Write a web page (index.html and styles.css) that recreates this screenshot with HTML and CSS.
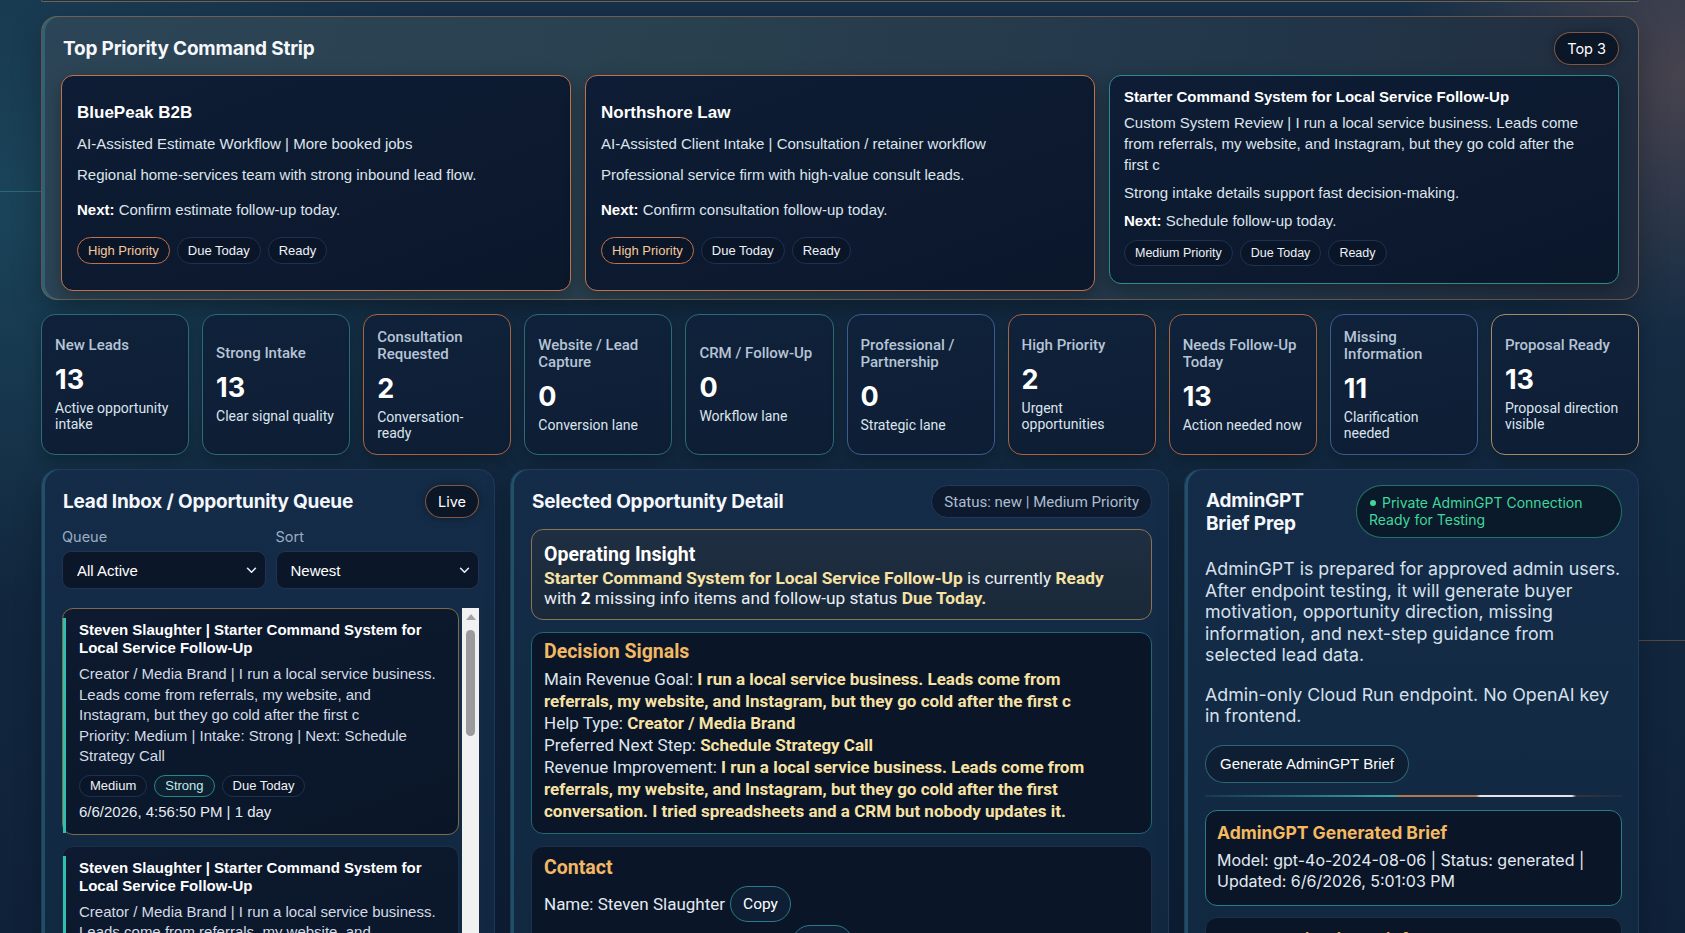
FILE: index.html
```html
<!DOCTYPE html>
<html lang="en">
<head>
    <meta charset="UTF-8">
    <meta name="viewport" content="width=device-width, initial-scale=1.0">
    <title>Opportunity Command Center</title>
    <link rel="stylesheet" href="styles.css">
</head>
<body>
    <div class="shell">
        <!-- tail of the header panel above -->
        <div class="hero-edge"></div>

        <!-- Top priority strip -->
        <section class="strip">
            <div class="strip-head">
                <h2>Top Priority Command Strip</h2>
                <span class="pill pill-warm">Top 3</span>
            </div>
            <div class="strip-cards">
                <div class="cmd-card hot">
                    <h3>BluePeak B2B</h3>
                    <p>AI-Assisted Estimate Workflow | More booked jobs</p>
                    <p>Regional home-services team with strong inbound lead flow.</p>
                    <p class="next"><b>Next:</b> Confirm estimate follow-up today.</p>
                    <div class="tags">
                        <span class="tag tag-hot">High Priority</span>
                        <span class="tag">Due Today</span>
                        <span class="tag">Ready</span>
                    </div>
                </div>
                <div class="cmd-card hot">
                    <h3>Northshore Law</h3>
                    <p>AI-Assisted Client Intake | Consultation / retainer workflow</p>
                    <p>Professional service firm with high-value consult leads.</p>
                    <p class="next"><b>Next:</b> Confirm consultation follow-up today.</p>
                    <div class="tags">
                        <span class="tag tag-hot">High Priority</span>
                        <span class="tag">Due Today</span>
                        <span class="tag">Ready</span>
                    </div>
                </div>
                <div class="cmd-card selected">
                    <h3>Starter Command System for Local Service Follow-Up</h3>
                    <p>Custom System Review | I run a local service business. Leads come from referrals, my website, and Instagram, but they go cold after the first c</p>
                    <p>Strong intake details support fast decision-making.</p>
                    <p><b>Next:</b> Schedule follow-up today.</p>
                    <div class="tags">
                        <span class="tag">Medium Priority</span>
                        <span class="tag">Due Today</span>
                        <span class="tag">Ready</span>
                    </div>
                </div>
            </div>
        </section>

        <!-- Pipeline counters -->
        <section class="stats">
            <div class="stat teal">
                <div class="stat-label">New Leads</div>
                <div class="stat-num">13</div>
                <div class="stat-sub">Active opportunity intake</div>
            </div>
            <div class="stat teal">
                <div class="stat-label">Strong Intake</div>
                <div class="stat-num">13</div>
                <div class="stat-sub">Clear signal quality</div>
            </div>
            <div class="stat orange">
                <div class="stat-label">Consultation Requested</div>
                <div class="stat-num">2</div>
                <div class="stat-sub">Conversation-ready</div>
            </div>
            <div class="stat teal">
                <div class="stat-label">Website / Lead Capture</div>
                <div class="stat-num">0</div>
                <div class="stat-sub">Conversion lane</div>
            </div>
            <div class="stat teal">
                <div class="stat-label">CRM / Follow-Up</div>
                <div class="stat-num">0</div>
                <div class="stat-sub">Workflow lane</div>
            </div>
            <div class="stat blue">
                <div class="stat-label">Professional / Partnership</div>
                <div class="stat-num">0</div>
                <div class="stat-sub">Strategic lane</div>
            </div>
            <div class="stat orange">
                <div class="stat-label">High Priority</div>
                <div class="stat-num">2</div>
                <div class="stat-sub">Urgent opportunities</div>
            </div>
            <div class="stat orange">
                <div class="stat-label">Needs Follow-Up Today</div>
                <div class="stat-num">13</div>
                <div class="stat-sub">Action needed now</div>
            </div>
            <div class="stat blue">
                <div class="stat-label">Missing Information</div>
                <div class="stat-num">11</div>
                <div class="stat-sub">Clarification needed</div>
            </div>
            <div class="stat tan">
                <div class="stat-label">Proposal Ready</div>
                <div class="stat-num">13</div>
                <div class="stat-sub">Proposal direction visible</div>
            </div>
        </section>

        <div class="workspace">
            <!-- Lead inbox -->
            <section class="panel">
                <div class="panel-head">
                    <h2>Lead Inbox / Opportunity Queue</h2>
                    <span class="pill pill-warm">Live</span>
                </div>
                <div class="filters">
                    <label class="field">
                        <span>Queue</span>
                        <div class="select-wrap">
                            <select><option>All Active</option><option>Due Today</option></select>
                            <svg class="chev" viewBox="0 0 12 8" width="11" height="7"><path d="M1.5 1.5l4.5 4.5 4.5-4.5" fill="none" stroke="#e9eef5" stroke-width="1.8" stroke-linecap="round" stroke-linejoin="round"/></svg>
                        </div>
                    </label>
                    <label class="field">
                        <span>Sort</span>
                        <div class="select-wrap">
                            <select><option>Newest</option><option>Oldest</option></select>
                            <svg class="chev" viewBox="0 0 12 8" width="11" height="7"><path d="M1.5 1.5l4.5 4.5 4.5-4.5" fill="none" stroke="#e9eef5" stroke-width="1.8" stroke-linecap="round" stroke-linejoin="round"/></svg>
                        </div>
                    </label>
                </div>

                <div class="lead-scroll">
                    <div class="lead-list">
                        <article class="lead-card active">
                            <h4>Steven Slaughter | Starter Command System for Local Service Follow-Up</h4>
                            <p>Creator / Media Brand | I run a local service business. Leads come from referrals, my website, and Instagram, but they go cold after the first c</p>
                            <p>Priority: Medium | Intake: Strong | Next: Schedule Strategy Call</p>
                            <div class="tags">
                                <span class="tag">Medium</span>
                                <span class="tag tag-teal">Strong</span>
                                <span class="tag">Due Today</span>
                            </div>
                            <div class="lead-date">6/6/2026, 4:56:50 PM | 1 day</div>
                        </article>
                        <article class="lead-card">
                            <h4>Steven Slaughter | Starter Command System for Local Service Follow-Up</h4>
                            <p>Creator / Media Brand | I run a local service business. Leads come from referrals, my website, and Instagram, but they go cold after the first c</p>
                            <p>Priority: Medium | Intake: Strong | Next: Schedule Strategy Call</p>
                            <div class="tags">
                                <span class="tag">Medium</span>
                                <span class="tag tag-teal">Strong</span>
                                <span class="tag">Due Today</span>
                            </div>
                            <div class="lead-date">6/6/2026, 4:41:12 PM | 1 day</div>
                        </article>
                    </div>
                    <!-- list scrollbar -->
                    <div class="scrollbar">
                        <span class="sb-arrow"></span>
                        <span class="sb-thumb"></span>
                    </div>
                </div>
            </section>

            <!-- Selected lead detail -->
            <section class="panel detail">
                <div class="panel-head">
                    <h2>Selected Opportunity Detail</h2>
                    <span class="pill pill-status">Status: new | Medium Priority</span>
                </div>

                <div class="box insight">
                    <h3>Operating Insight</h3>
                    <p><b>Starter Command System for Local Service Follow-Up</b> is currently <b>Ready</b> with <b class="plain">2</b> missing info items and follow-up status <b>Due Today.</b></p>
                </div>

                <div class="box signals">
                    <h3>Decision Signals</h3>
                    <p>Main Revenue Goal: <b>I run a local service business. Leads come from referrals, my website, and Instagram, but they go cold after the first c</b></p>
                    <p>Help Type: <b>Creator / Media Brand</b></p>
                    <p>Preferred Next Step: <b>Schedule Strategy Call</b></p>
                    <p>Revenue Improvement: <b>I run a local service business. Leads come from referrals, my website, and Instagram, but they go cold after the first conversation. I tried spreadsheets and a CRM but nobody updates it.</b></p>
                </div>

                <div class="box contact">
                    <h3>Contact</h3>
                    <div class="contact-row">Name: Steven Slaughter <button class="btn-copy">Copy</button></div>
                    <div class="contact-row">Email: steven@slaughterco.com <button class="btn-copy">Copy</button></div>
                    <div class="contact-row">Phone: (555) 014-2291 <button class="btn-copy">Copy</button></div>
                </div>
            </section>

            <!-- AdminGPT -->
            <section class="panel admin">
                <div class="panel-head">
                    <h2>AdminGPT Brief Prep</h2>
                    <span class="conn-pill"><i class="dot"></i> Private AdminGPT Connection Ready for Testing</span>
                </div>
                <p class="admin-copy">AdminGPT is prepared for approved admin users. After endpoint testing, it will generate buyer motivation, opportunity direction, missing information, and next-step guidance from selected lead data.</p>
                <p class="admin-copy second">Admin-only Cloud Run endpoint. No OpenAI key in frontend.</p>
                <button class="btn-generate">Generate AdminGPT Brief</button>
                <div class="progress"></div>

                <div class="brief">
                    <h3>AdminGPT Generated Brief</h3>
                    <p>Model: gpt-4o-2024-08-06 | Status: generated | Updated: 6/6/2026, 5:01:03 PM</p>
                </div>
                <div class="brief plain">
                    <h3>Buyer Motivation Brief</h3>
                    <p>The buyer wants a dependable follow-up rhythm so warm leads stop going cold after the first conversation.</p>
                </div>
            </section>
        </div>
    </div>
</body>
</html>
```

FILE: styles.css
```css
* {
    box-sizing: border-box;
}

html,
body {
    height: 100%;
}

body {
    margin: 0;
    overflow: hidden;
    font-family: "Liberation Sans", Arial, sans-serif;
    color: #eef3f8;
    background:
        linear-gradient(rgba(70, 160, 180, 0.4), rgba(70, 160, 180, 0.4)) 0 191px / 41px 1px no-repeat,
        linear-gradient(rgba(190, 120, 80, 0.4), rgba(190, 120, 80, 0.4)) 100% 640px / 46px 1px no-repeat,
        radial-gradient(ellipse 420px 380px at 100% 8%, rgba(120, 85, 85, 0.5), transparent 70%),
        radial-gradient(ellipse 700px 560px at 0% 22%, rgba(30, 85, 105, 0.55), transparent 70%),
        linear-gradient(180deg, #173149 0%, #12283f 55%, #0f2139 100%);
}

.shell {
    width: 1598px;
    margin-left: 41px;
    display: flex;
    flex-direction: column;
    gap: 14px;
}

.hero-edge {
    height: 2px;
    border: 1px solid rgba(160, 135, 110, 0.6);
    border-top: none;
    border-radius: 0 0 10px 10px;
    background: #22303d;
}

h2,
h3,
h4 {
    margin: 0;
}

/* pills */
.pill {
    display: inline-flex;
    align-items: center;
    height: 33px;
    padding: 0 12px;
    border-radius: 17px;
    background: #0b1627;
    font-family: Inter, "Noto Sans", sans-serif;
    font-size: 14.5px;
    color: #fff;
    white-space: nowrap;
}

.pill-warm {
    border: 1px solid rgba(180, 115, 80, 0.7);
    box-shadow: 0 0 10px rgba(0, 0, 0, 0.35);
}

.pill-status {
    border: 1px solid #22395a;
    background: #0d1a2e;
    color: #aebccf;
    font-family: Roboto, sans-serif;
    font-size: 15px;
    padding: 0 12px;
}

.tags {
    display: flex;
    gap: 7px;
}

.tag {
    display: inline-flex;
    align-items: center;
    height: 27px;
    padding: 0 10px;
    border: 1px solid #1d3251;
    border-radius: 14px;
    background: #0a1628;
    font-size: 13px;
    color: #eef2f7;
    white-space: nowrap;
}

.tag-hot {
    border-color: #c0724b;
    color: #f7c99c;
}

.tag-teal {
    border-color: #2a8585;
    background: #0c2032;
    color: #c3e9e5;
}

/* Top priority strip */
.strip {
    border: 1px solid rgba(190, 130, 90, 0.45);
    border-radius: 16px;
    padding: 15px 19px 8px;
    background: linear-gradient(100deg, #2c4556 0%, #29404f 40%, #223649 75%, #211f2f 140%);
    box-shadow: inset 3px 0 0 rgba(60, 150, 170, 0.35), 0 10px 30px rgba(0, 0, 0, 0.25);
}

.strip-head {
    display: flex;
    justify-content: space-between;
    align-items: center;
    height: 32px;
    margin-bottom: 11px;
}

.strip-head h2,
.panel-head h2 {
    font-family: Inter, "Noto Sans", sans-serif;
    font-weight: 700;
    font-size: 19px;
    letter-spacing: -0.2px;
    color: #f4f7fb;
}

.strip-head h2 {
    padding-left: 2px;
}

.strip-cards {
    display: grid;
    grid-template-columns: repeat(3, 1fr);
    gap: 14px;
    align-items: start;
}

.cmd-card {
    border: 1px solid #c0714a;
    border-radius: 12px;
    padding: 27px 15px 26px;
    background: linear-gradient(160deg, #0e1d35 0%, #0b172b 100%);
    box-shadow: 0 6px 18px rgba(0, 0, 0, 0.3);
}

.cmd-card h3 {
    font-size: 17px;
    line-height: 20px;
    margin-bottom: 10px;
    color: #fff;
}

.cmd-card p {
    margin: 0 0 10px;
    font-size: 15px;
    line-height: 21px;
    color: #dde4ec;
}

.cmd-card p b {
    color: #fff;
}

.cmd-card .next {
    margin-top: 14px;
}

.cmd-card .tags {
    margin-top: 17px;
}

.cmd-card.selected {
    border-color: #2b8a8c;
    padding: 12px 20px 17px 14px;
}

.cmd-card.selected h3 {
    font-size: 15px;
    line-height: 18px;
    margin-bottom: 6px;
}

.cmd-card.selected p {
    margin-bottom: 7px;
}

.cmd-card.selected .tags {
    margin-top: 9px;
}

.cmd-card.selected .tag {
    height: 26px;
    font-size: 12.5px;
}

/* Counters */
.stats {
    display: grid;
    grid-template-columns: repeat(10, 1fr);
    gap: 13px;
}

.stat {
    height: 141px;
    padding: 0 13px;
    border: 1px solid #2a6b75;
    border-radius: 14px;
    display: flex;
    flex-direction: column;
    justify-content: center;
    background: linear-gradient(170deg, #10223b 0%, #0d1d34 100%);
    box-shadow: 0 6px 16px rgba(0, 0, 0, 0.25);
}

.stat.orange {
    border-color: #a8633f;
}

.stat.blue {
    border-color: #3b5d92;
}

.stat.tan {
    border-color: #a68a66;
}

.stat-label {
    font-family: Roboto, sans-serif;
    font-weight: 500;
    font-size: 15px;
    line-height: 17px;
    color: #b6c4d6;
    margin-bottom: 11px;
}

.stat-num {
    font-family: Inter, "Noto Sans", sans-serif;
    font-weight: 700;
    font-size: 27px;
    line-height: 30px;
    color: #fff;
    margin-bottom: 5px;
}

.stat-sub {
    font-family: Roboto, sans-serif;
    font-size: 14px;
    line-height: 16px;
    color: #dce4ed;
}

/* Lower workspace */
.workspace {
    display: grid;
    grid-template-columns: 454px 659px 1fr;
    gap: 15px;
    align-items: start;
}

.panel {
    min-height: 620px;
    border: 1px solid #1f3b5a;
    border-radius: 16px;
    padding: 15px 15px 16px 20px;
    background: linear-gradient(180deg, #142c48 0%, #11273f 100%);
    box-shadow: inset 3px 0 0 rgba(60, 150, 170, 0.35), 0 10px 26px rgba(0, 0, 0, 0.25);
}

.panel-head {
    display: flex;
    justify-content: space-between;
    align-items: center;
    min-height: 33px;
}

.panel-head h2 {
    padding-left: 1px;
}

/* Inbox filters */
.filters {
    display: grid;
    grid-template-columns: 1fr 1fr;
    gap: 10px;
    margin-top: 11px;
}

.field span {
    display: block;
    font-family: Inter, "Noto Sans", sans-serif;
    font-size: 14.5px;
    line-height: 16px;
    color: #9badc2;
    margin-bottom: 6px;
}

.select-wrap {
    position: relative;
}

.select-wrap select {
    appearance: none;
    width: 100%;
    height: 38px;
    padding: 0 30px 0 14px;
    border: 1px solid #1e3452;
    border-radius: 9px;
    background: #0b1729;
    color: #fff;
    font-family: "Liberation Sans", Arial, sans-serif;
    font-size: 15px;
}

.select-wrap .chev {
    position: absolute;
    right: 9px;
    top: 16px;
    pointer-events: none;
}

.lead-scroll {
    display: flex;
    gap: 3px;
    height: 330px;
    margin-top: 19px;
}

.lead-list {
    flex: 1;
    overflow: hidden;
}

.scrollbar {
    width: 17px;
    flex-shrink: 0;
    display: flex;
    flex-direction: column;
    align-items: center;
    background: #f1f1f1;
}

.sb-arrow {
    width: 0;
    height: 0;
    margin-top: 6px;
    border-left: 5px solid transparent;
    border-right: 5px solid transparent;
    border-bottom: 6px solid #a3a3a3;
}

.sb-thumb {
    width: 9px;
    height: 106px;
    margin-top: 10px;
    border-radius: 5px;
    background: #9a9a9a;
}

.lead-card {
    position: relative;
    border: 1px solid #1c2f48;
    border-radius: 11px;
    padding: 12px 14px 13px 16px;
    margin-bottom: 11px;
    background: linear-gradient(160deg, #0d1a2f 0%, #0a1628 100%);
}

.lead-card::before {
    content: "";
    position: absolute;
    left: 0;
    top: 9px;
    bottom: 1px;
    width: 3px;
    background: #2fbfae;
}

.lead-card.active {
    border-color: #7c6a4a;
}

.lead-card h4 {
    font-size: 15px;
    line-height: 18px;
    color: #fff;
    margin-bottom: 7px;
}

.lead-card p {
    margin: 0;
    font-size: 15px;
    line-height: 20.5px;
    color: #d3dbe5;
}

.lead-card .tags {
    margin-top: 8px;
}

.lead-card .tag {
    height: 22px;
    font-size: 13px;
}

.lead-date {
    margin-top: 6px;
    font-size: 15px;
    line-height: 18px;
    color: #e6ecf2;
}

/* Detail panel */
.detail {
    font-family: Roboto, sans-serif;
    padding-right: 16px;
}

.box {
    border-radius: 12px;
    padding: 10px 26px 11px 12px;
    margin-top: 12px;
    background: #0a1528;
    border: 1px solid #1d3049;
}

.box h3 {
    font-size: 19.5px;
    line-height: 22px;
    font-weight: 700;
    color: #f2b864;
    margin-bottom: 5px;
}

.box p {
    margin: 0;
    font-size: 17px;
    line-height: 22px;
    color: #dfe5ec;
}

.box b {
    color: #f7e2a3;
}

.insight {
    margin-top: 11px;
    padding-top: 14px;
    border-color: #8a7452;
    background: linear-gradient(180deg, #1f2e40 0%, #1a293a 100%);
}

.insight h3 {
    color: #fff;
    margin-bottom: 2px;
}

.insight p {
    font-size: 17.3px;
    line-height: 20px;
    color: #e8edf3;
}

.insight b.plain {
    color: #fff;
}

.signals {
    padding-top: 8px;
    border-color: #1f6a72;
}

.contact {
    padding-top: 10px;
}

.contact h3 {
    margin-bottom: 7px;
}

.contact-row {
    display: flex;
    align-items: center;
    gap: 5px;
    font-size: 17px;
    color: #e3e9f0;
    margin-bottom: 3px;
}

.btn-copy {
    height: 36px;
    padding: 0 12px;
    border: 1px solid #2b7b84;
    border-radius: 18px;
    background: #0e1f35;
    color: #fff;
    font-family: Roboto, sans-serif;
    font-size: 15.5px;
}

/* AdminGPT panel */
.admin {
    font-family: Inter, "Noto Sans", sans-serif;
    padding-right: 16px;
}

.admin .panel-head h2 {
    width: 120px;
    line-height: 23px;
}

.conn-pill {
    width: 266px;
    padding: 8px 14px 9px 12px;
    border: 1px solid rgba(52, 190, 150, 0.55);
    border-radius: 26px;
    background: #0a1a2b;
    color: #3fd89a;
    font-size: 14px;
    line-height: 17px;
}

.conn-pill .dot {
    display: inline-block;
    width: 6px;
    height: 6px;
    margin: 0 2px 2px 1px;
    border-radius: 50%;
    background: #3fd89a;
}

.admin-copy {
    margin: 20px 0 0;
    font-size: 17.8px;
    line-height: 21.5px;
    color: #d6e0ec;
}

.admin-copy.second {
    margin-top: 18px;
}

.btn-generate {
    margin-top: 18px;
    height: 38px;
    padding: 0 14px;
    border: 1px solid rgba(70, 160, 170, 0.55);
    border-radius: 19px;
    background: #0e1f34;
    color: #fff;
    font-family: "Liberation Sans", Arial, sans-serif;
    font-size: 15px;
}

.progress {
    height: 2px;
    margin-top: 12px;
    background: linear-gradient(90deg, rgba(40, 120, 130, 0.2) 0%, #3aa3a8 45%, #b8764e 47%, #b8764e 65%, #e4e2ec 66%, #e4e2ec 88%, rgba(90, 60, 50, 0.5) 89%, rgba(90, 60, 50, 0.2) 100%);
}

.brief {
    margin-top: 13px;
    padding: 11px 13px 13px 11px;
    border: 1px solid #2a7c84;
    border-radius: 12px;
    background: #0a1628;
}

.brief.plain {
    margin-top: 11px;
    border-color: #1d3049;
}

.brief h3 {
    font-size: 17.5px;
    line-height: 21px;
    font-weight: 700;
    color: #f5b95f;
    margin-bottom: 7px;
}

.brief p {
    margin: 0;
    font-size: 16px;
    line-height: 21px;
    color: #e3eaf2;
}
```
